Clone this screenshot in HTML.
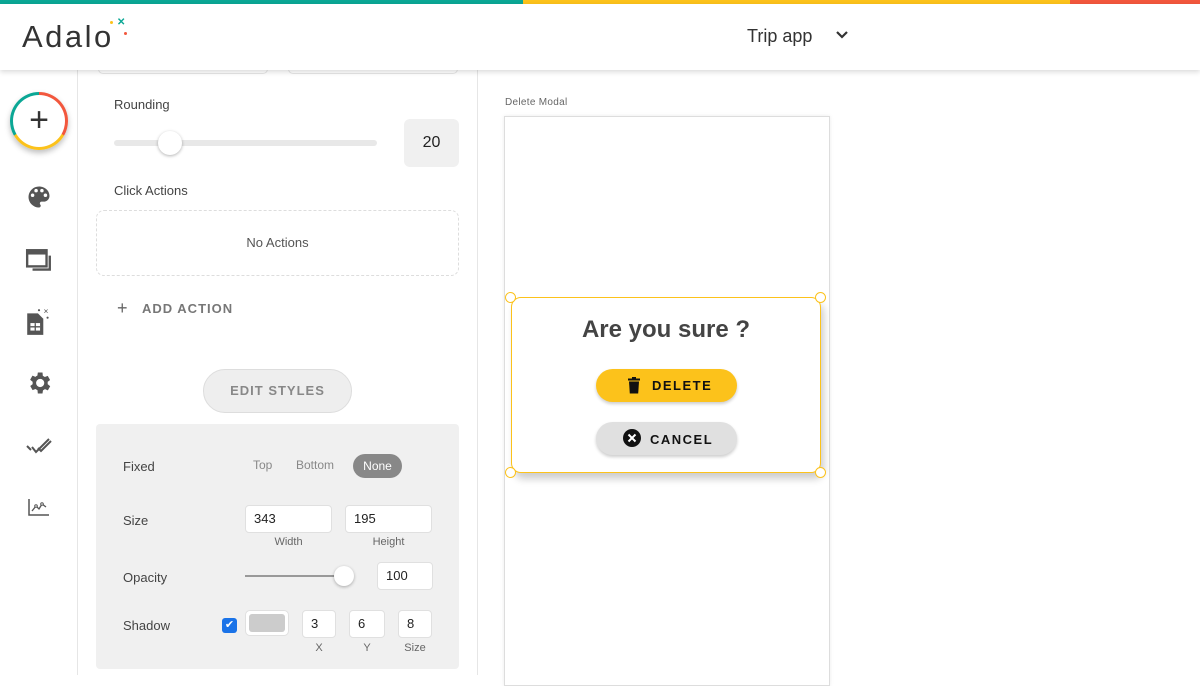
<!DOCTYPE html>
<html><head><meta charset="utf-8"><style>
*{box-sizing:border-box;margin:0;padding:0}
body{width:1200px;height:675px;overflow:hidden;background:#fff;font-family:"Liberation Sans",sans-serif;position:relative;color:#333}
.abs{position:absolute}
.lbl{font-size:13px;color:#444}
.inp{position:absolute;background:#fff;border:1px solid #e0e0e0;border-radius:4px;font-size:13px;color:#222;padding-left:8px;line-height:26px;height:28px}
.sub{position:absolute;font-size:11px;color:#666;text-align:center}
</style></head><body>
<div class="abs" style="top:0;left:0;width:523px;height:4px;background:#0ba795"></div>
<div class="abs" style="top:0;left:523px;width:547px;height:4px;background:#fcc21b"></div>
<div class="abs" style="top:0;left:1070px;width:130px;height:4px;background:#f2573d"></div>
<div class="abs" style="top:4px;left:0;width:1200px;height:66px;background:#fff;box-shadow:0 2px 5px rgba(0,0,0,.15);z-index:5">
 <div class="abs" style="left:22px;top:15px;font-size:31px;color:#333;letter-spacing:2.5px;font-family:'Liberation Sans',sans-serif">Adalo</div>
 <div class="abs" style="left:117px;top:13px;color:#0ba795;font-size:10px;font-weight:bold">✕</div>
 <div class="abs" style="left:110px;top:17px;width:3px;height:3px;background:#fcc21b;border-radius:50%"></div>
 <div class="abs" style="left:124px;top:28px;width:3px;height:3px;background:#f2573d;border-radius:50%"></div>
 <div class="abs" style="left:747px;top:22px;font-size:18px;color:#333">Trip app</div>
 <svg class="abs" style="left:835px;top:26px" width="14" height="10" viewBox="0 0 14 10"><path d="M2 2l5 5 5-5" stroke="#333" stroke-width="2.2" fill="none"/></svg>
</div>
<!-- sidebar -->
<div class="abs" style="left:0;top:70px;width:78px;height:605px;border-right:1px solid #e6e6e6"></div>
<div class="abs" style="left:10px;top:92px;width:58px;height:58px;border-radius:50%;background:conic-gradient(#f2573d 0 120deg,#fcc21b 120deg 240deg,#0ba795 240deg 360deg);box-shadow:0 3px 6px rgba(0,0,0,.25)">
 <div class="abs" style="left:3px;top:3px;width:52px;height:52px;border-radius:50%;background:#fff;text-align:center;line-height:50px;font-size:34px;color:#333">+</div>
</div>
<svg class="abs" style="left:25px;top:183px" width="28" height="28" viewBox="0 0 24 24"><path fill="#555" d="M12 3a9 9 0 0 0 0 18c.8 0 1.5-.7 1.5-1.5 0-.4-.1-.7-.4-1-.2-.3-.4-.6-.4-1 0-.8.7-1.5 1.5-1.5H16a5 5 0 0 0 5-5c0-4.4-4-8-9-8zm-5.5 9a1.5 1.5 0 1 1 0-3 1.5 1.5 0 0 1 0 3zm3-4a1.5 1.5 0 1 1 0-3 1.5 1.5 0 0 1 0 3zm5 0a1.5 1.5 0 1 1 0-3 1.5 1.5 0 0 1 0 3zm3 4a1.5 1.5 0 1 1 0-3 1.5 1.5 0 0 1 0 3z"/></svg>
<svg class="abs" style="left:25px;top:247px" width="28" height="28" viewBox="0 0 26 26"><rect x="2" y="3" width="18" height="15" fill="none" stroke="#555" stroke-width="2.2"/><rect x="2" y="3" width="18" height="4" fill="#555"/><path d="M23 8v13H7" fill="none" stroke="#555" stroke-width="2.2"/></svg>
<svg class="abs" style="left:25px;top:307px" width="28" height="30" viewBox="0 0 26 28"><path d="M2 6h10l5 5v15H2z" fill="#555"/><rect x="5" y="15" width="9" height="7" fill="#fff"/><path d="M5 18.5h9M9.5 15v7" stroke="#555" stroke-width="1.2"/><text x="17" y="6" font-size="6" fill="#555">✕</text><circle cx="13" cy="3" r="1" fill="#555"/><circle cx="21" cy="10" r="1" fill="#555"/></svg>
<svg class="abs" style="left:25px;top:369px" width="28" height="28" viewBox="0 0 24 24"><path fill="#555" d="M19.4 13a7.5 7.5 0 0 0 0-2l2.1-1.6-2-3.5-2.5 1a7 7 0 0 0-1.7-1L15 3h-4l-.4 2.7a7 7 0 0 0-1.7 1l-2.5-1-2 3.5L6.6 11a7.5 7.5 0 0 0 0 2l-2.1 1.6 2 3.5 2.5-1a7 7 0 0 0 1.7 1L11 21h4l.4-2.7a7 7 0 0 0 1.7-1l2.5 1 2-3.5zM13 15.5a3.5 3.5 0 1 1 0-7 3.5 3.5 0 0 1 0 7z"/></svg>
<svg class="abs" style="left:25px;top:436px" width="28" height="20" viewBox="0 0 28 20"><path d="M2 10l4 4M7 11l4 5L24 3M13 12l3 3L26 5" stroke="#555" stroke-width="2" fill="none"/></svg>
<svg class="abs" style="left:27px;top:497px" width="24" height="20" viewBox="0 0 24 20"><path d="M2 2v16h20" stroke="#555" stroke-width="1.5" fill="none"/><path d="M5 14l4-5 3 3 3-5 4 3" stroke="#555" stroke-width="1.3" fill="none"/><circle cx="9" cy="9" r="1.3" fill="#fff" stroke="#555"/><circle cx="15" cy="7" r="1.3" fill="#fff" stroke="#555"/></svg>
<!-- panel -->
<div class="abs" style="left:477px;top:70px;width:1px;height:605px;background:#e6e6e6"></div>
<div class="abs" style="left:98px;top:64px;width:170px;height:10px;border:1px solid #e6e6e6;border-radius:5px"></div>
<div class="abs" style="left:288px;top:64px;width:170px;height:10px;border:1px solid #e6e6e6;border-radius:5px"></div>
<div class="abs lbl" style="left:114px;top:97px">Rounding</div>
<div class="abs" style="left:114px;top:140px;width:263px;height:6px;border-radius:3px;background:#e8e8e8"></div>
<div class="abs" style="left:158px;top:131px;width:24px;height:24px;border-radius:50%;background:#fff;box-shadow:0 1px 3px rgba(0,0,0,.3)"></div>
<div class="abs" style="left:404px;top:119px;width:55px;height:48px;border-radius:6px;background:#f0f0f0;font-size:16px;color:#222;text-align:center;line-height:48px">20</div>
<div class="abs lbl" style="left:114px;top:183px">Click Actions</div>
<div class="abs" style="left:96px;top:210px;width:363px;height:66px;border:1.5px dashed #ddd;border-radius:8px;text-align:center;line-height:63px;font-size:13px;color:#555">No Actions</div>
<div class="abs" style="left:117px;top:298px;font-size:18px;color:#666">+</div>
<div class="abs" style="left:142px;top:301px;font-size:13px;color:#777;letter-spacing:1px;font-weight:bold">ADD ACTION</div>
<div class="abs" style="left:203px;top:369px;width:149px;height:44px;border-radius:22px;background:#eee;border:1px solid #ddd;text-align:center;line-height:42px;font-size:13px;color:#888;letter-spacing:1px;font-weight:bold">EDIT STYLES</div>
<div class="abs" style="left:96px;top:424px;width:363px;height:245px;background:#f0f0f0;border-radius:4px">
 <div class="abs lbl" style="left:27px;top:35px">Fixed</div>
 <div class="abs" style="left:157px;top:34px;font-size:12px;color:#888">Top</div>
 <div class="abs" style="left:200px;top:34px;font-size:12px;color:#888">Bottom</div>
 <div class="abs" style="left:257px;top:30px;width:49px;height:24px;border-radius:12px;background:#888;color:#fff;font-size:12px;text-align:center;line-height:24px">None</div>
 <div class="abs lbl" style="left:27px;top:89px">Size</div>
 <div class="inp" style="left:149px;top:81px;width:87px">343</div>
 <div class="inp" style="left:249px;top:81px;width:87px">195</div>
 <div class="sub" style="left:149px;top:112px;width:87px">Width</div>
 <div class="sub" style="left:249px;top:112px;width:87px">Height</div>
 <div class="abs lbl" style="left:27px;top:146px">Opacity</div>
 <div class="abs" style="left:149px;top:151px;width:100px;height:1.5px;background:#999"></div>
 <div class="abs" style="left:238px;top:142px;width:20px;height:20px;border-radius:50%;background:#fff;box-shadow:0 1px 3px rgba(0,0,0,.3)"></div>
 <div class="inp" style="left:281px;top:138px;width:56px">100</div>
 <div class="abs lbl" style="left:27px;top:194px">Shadow</div>
 <div class="abs" style="left:126px;top:194px;width:15px;height:15px;border-radius:3px;background:#1a73e8;color:#fff;font-size:11px;text-align:center;line-height:15px">✔</div>
 <div class="abs" style="left:149px;top:186px;width:44px;height:26px;border-radius:5px;background:#fff;border:1px solid #e0e0e0;padding:3px"><div style="width:100%;height:100%;background:#ccc;border-radius:3px"></div></div>
 <div class="inp" style="left:206px;top:186px;width:34px">3</div>
 <div class="inp" style="left:253px;top:186px;width:36px">6</div>
 <div class="inp" style="left:302px;top:186px;width:34px">8</div>
 <div class="sub" style="left:206px;top:218px;width:34px">X</div>
 <div class="sub" style="left:253px;top:218px;width:36px">Y</div>
 <div class="sub" style="left:298px;top:218px;width:42px">Size</div>
</div>
<!-- canvas -->
<div class="abs" style="left:505px;top:97px;font-size:10px;color:#666;letter-spacing:.3px">Delete Modal</div>
<div class="abs" style="left:504px;top:116px;width:326px;height:570px;background:#fff;border:1px solid #ddd;box-shadow:0 0 4px rgba(0,0,0,.08)"></div>
<div class="abs" style="left:511px;top:297px;width:310px;height:176px;border:1.5px solid #fcc21b;border-radius:10px;background:#fff;box-shadow:3px 6px 8px rgba(0,0,0,.2)"></div>
<div class="abs" style="left:505px;top:292px;width:11px;height:11px;border:1.5px solid #fcc21b;border-radius:50%;background:#fff"></div>
<div class="abs" style="left:815px;top:292px;width:11px;height:11px;border:1.5px solid #fcc21b;border-radius:50%;background:#fff"></div>
<div class="abs" style="left:505px;top:467px;width:11px;height:11px;border:1.5px solid #fcc21b;border-radius:50%;background:#fff"></div>
<div class="abs" style="left:815px;top:467px;width:11px;height:11px;border:1.5px solid #fcc21b;border-radius:50%;background:#fff"></div>
<div class="abs" style="left:511px;top:316px;width:310px;text-align:center;font-size:24px;font-weight:bold;color:#444">Are you sure ?</div>
<div class="abs" style="left:596px;top:369px;width:141px;height:33px;border-radius:17px;background:#fcc21b;box-shadow:0 2px 3px rgba(0,0,0,.2)">
 <svg class="abs" style="left:31px;top:8px" width="14" height="17" viewBox="0 0 14 17"><rect x="1" y="1.5" width="12" height="2" fill="#111"/><rect x="5" y="0" width="4" height="2" fill="#111"/><path d="M2 4.5h10l-.8 12H2.8z" fill="#111"/></svg>
 <div class="abs" style="left:56px;top:9px;font-size:13px;font-weight:bold;letter-spacing:1.5px;color:#111">DELETE</div>
</div>
<div class="abs" style="left:596px;top:422px;width:141px;height:33px;border-radius:17px;background:#e0e0e0;box-shadow:0 2px 3px rgba(0,0,0,.2)">
 <svg class="abs" style="left:27px;top:7px" width="18" height="18" viewBox="0 0 18 18"><circle cx="9" cy="9" r="9" fill="#111"/><path d="M5.5 5.5l7 7M12.5 5.5l-7 7" stroke="#fff" stroke-width="2"/></svg>
 <div class="abs" style="left:54px;top:10px;font-size:13px;font-weight:bold;letter-spacing:1.5px;color:#111">CANCEL</div>
</div>
</body></html>
